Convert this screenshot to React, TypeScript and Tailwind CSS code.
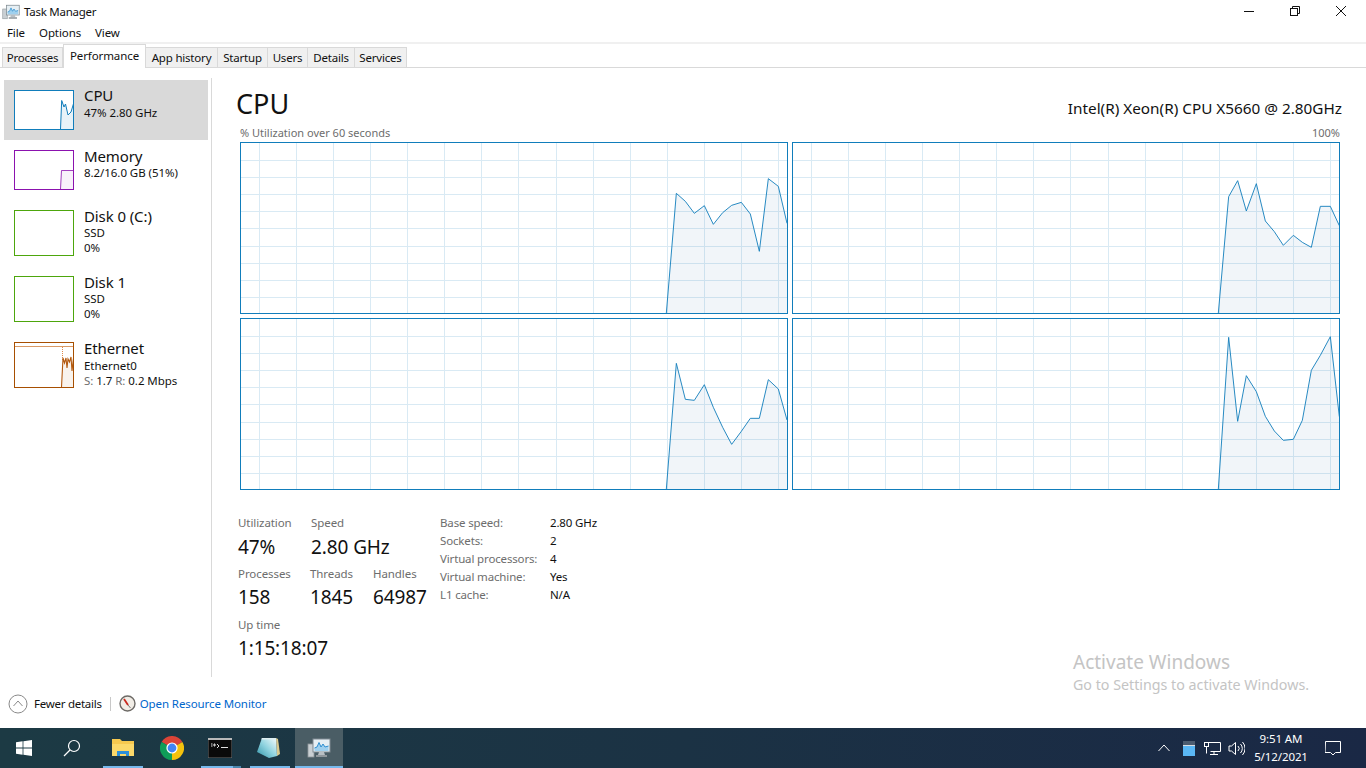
import React from "react";

type P = [number, number];
const conv = (pts: P[], ox: number, oy: number) =>
  pts.map(([x, y]) => [ox + x / 3, oy + y / 3] as P);

const GRAPHS: { x: number; y: number; first: number; pts: P[] }[] = [
  {
    x: 240, y: 142, first: 259,
    pts: conv([[79,549],[109,190],[136,214],[163,250],[193,227],[220,283],[248,248],[275,226],[304,217],[331,252],[358,364],[385,146],[415,169],[441,280]], 640, 130),
  },
  {
    x: 792, y: 142, first: 811,
    pts: conv([[115,549],[146,200],[173,152],[199,243],[229,161],[256,273],[283,305],[310,346],[340,316],[367,337],[394,352],[421,229],[451,229],[478,287]], 1180, 130),
  },
  {
    x: 240, y: 318, first: 259,
    pts: conv([[79,537],[109,160],[136,268],[163,271],[193,224],[220,292],[248,352],[275,403],[304,364],[331,325],[358,325],[385,209],[415,237],[441,330]], 640, 310),
  },
  {
    x: 792, y: 318, first: 811,
    pts: conv([[115,537],[146,82],[173,334],[199,197],[229,245],[256,319],[283,363],[310,391],[340,388],[367,331],[394,181],[421,136],[451,80],[478,320]], 1180, 310),
  },
];

function CpuGraph({ x, y, first, pts }: { x: number; y: number; first: number; pts: P[] }) {
  const bottom = y + 171;
  const right = x + 547;
  const vs = Array.from({ length: 15 }, (_, k) => Math.round(first + 37.07 * k) + 0.5);
  const hs = Array.from({ length: 9 }, (_, k) => Math.round(y + 18 + 17.1 * k) + 0.5);
  const line = pts.map((p) => p.join(",")).join(" ");
  const area = `${pts[0][0]},${bottom} ${line} ${pts[pts.length - 1][0]},${bottom}`;
  return (
    <div className="h-[172px] w-[548px] border border-[#117dbb] bg-white overflow-hidden">
      <svg width="546" height="170" viewBox={`${x + 1} ${y + 1} 546 170`} className="block">
        {vs.map((v) => (
          <line key={v} x1={v} x2={v} y1={y} y2={bottom} stroke="#d9eaf4" strokeWidth="1" />
        ))}
        {hs.map((h) => (
          <line key={h} x1={x} x2={right} y1={h} y2={h} stroke="#d9eaf4" strokeWidth="1" />
        ))}
        <polygon points={area} fill="#3a6ea5" fillOpacity="0.07" />
        <polyline points={line} fill="none" stroke="#117dbb" strokeWidth="1" strokeOpacity="0.9" />
      </svg>
    </div>
  );
}

function SideItem({
  name, lines, thumb, selected, cls, nameCls = "leading-[18px]",
}: {
  name: string;
  lines: React.ReactNode[];
  thumb: React.ReactNode;
  selected?: boolean;
  cls: string;
  nameCls?: string;
}) {
  return (
    <div className={`ml-[4px] w-[204px] flex gap-[10px] pl-[10px] pt-[10px] ${cls} ${selected ? "bg-[#d9d9d9]" : ""}`}>
      {thumb}
      <div className={`${selected ? "-mt-[4px]" : "-mt-[3px]"} text-[#111]`}>
        <div className={`text-[15px] ${nameCls}`}>{name}</div>
        {lines.map((l, i) => (
          <div key={i} className="text-[11.5px] leading-[15px] tracking-[-0.05px]">{l}</div>
        ))}
      </div>
    </div>
  );
}

const tabs: [string, string][] = [
  ["Processes", "w-[61px]"],
  ["Performance", "w-[83px]"],
  ["App history", "w-[72px]"],
  ["Startup", "w-[50px]"],
  ["Users", "w-[40px]"],
  ["Details", "w-[47px]"],
  ["Services", "w-[52px]"],
];

function Stat({ label, value, cls }: { label: string; value: string; cls: string }) {
  return (
    <div className={cls}>
      <div className="text-[11.5px] leading-[16px] tracking-[-0.08px] text-[#6d6d6d]">{label}</div>
      <div className="text-[19px] leading-[30px] mt-[0.5px] text-[#111] whitespace-nowrap">{value}</div>
    </div>
  );
}

const specs = [
  ["Base speed:", "2.80 GHz"],
  ["Sockets:", "2"],
  ["Virtual processors:", "4"],
  ["Virtual machine:", "Yes"],
  ["L1 cache:", "N/A"],
];

function TmIcon({ size = 24 }: { size?: number }) {
  return (
    <svg width={size} height={size} viewBox="0 0 24 24">
      <rect x="1" y="8" width="6" height="13" fill="#c9cfd3" stroke="#8f979c" strokeWidth="0.8" />
      <rect x="6" y="3" width="17" height="13" fill="#e6eff4" stroke="#7f8a91" strokeWidth="1" />
      <polygon points="7.5,15 7.5,12 10,11 12,6.500 14,11 16,8 18,11 21.5,10 21.5,15" fill="#9fd0ee" />
      <polyline points="7.5,12 10,11 12,6.5 14,11 16,8 18,11 21.5,10" fill="none" stroke="#2f8fd0" strokeWidth="1" />
      <path d="M12 16h5l1 3h-7z" fill="#b8bfc4" />
      <rect x="9" y="19" width="11" height="2" fill="#8f979c" />
    </svg>
  );
}

export default function App() {
  return (
    <div className="relative flex h-[768px] w-[1366px] flex-col overflow-hidden bg-white font-['Noto_Sans',sans-serif] text-[11.5px] tracking-[-0.1px] text-[#111]">
      {/* title bar */}
      <div className="flex h-[24px] shrink-0 items-center">
        <div className="ml-[2px] mr-[4px] flex h-[18px] w-[18px] items-center justify-center">
          <TmIcon size={18} />
        </div>
        <span className="tracking-[-0.25px]">Task Manager</span>
        <div className="ml-auto mr-[2px] -mt-[3px] flex h-full items-center">
          <div className="flex w-[46px] justify-center">
            <svg width="12" height="12" viewBox="0 0 12 12"><path d="M1 6.5h10" stroke="#111" strokeWidth="1" /></svg>
          </div>
          <div className="flex w-[46px] justify-center">
            <svg width="12" height="12" viewBox="0 0 12 12" fill="none" stroke="#111" strokeWidth="1">
              <rect x="1.5" y="3.5" width="7" height="7" />
              <path d="M3.5 3.5v-2h7v7h-2" />
            </svg>
          </div>
          <div className="flex w-[46px] justify-center">
            <svg width="12" height="12" viewBox="0 0 12 12" fill="none" stroke="#111" strokeWidth="1"><path d="M1 1l10 10M11 1L1 11" /></svg>
          </div>
        </div>
      </div>
      {/* menu */}
      <div className="flex h-[18px] shrink-0 items-center gap-[14px] pl-[7px]">
        <span>File</span>
        <span>Options</span>
        <span>View</span>
      </div>
      <div className="h-[2px] shrink-0 bg-[#f0f0f0]" />
      {/* tabs */}
      <div className="flex h-[24px] shrink-0 items-end border-b border-[#d9d9d9] pl-[2px]">
        {tabs.map(([t, w]) =>
          t === "Performance" ? (
            <div key={t} className={`relative -mb-px flex h-[24px] items-start justify-center border border-b-0 border-[#d9d9d9] bg-white pt-[2px] ${w}`}>
              {t}
            </div>
          ) : (
            <div key={t} className={`flex h-[20px] items-center justify-center border border-b-0 border-l-0 border-[#d9d9d9] bg-[#f0f0f0] tracking-[-0.2px] first:border-l ${w}`}>
              {t}
            </div>
          )
        )}
      </div>
      {/* main */}
      <div className="flex min-h-0 flex-1">
        <div className="w-[211px] shrink-0 pt-[12px]">
          <SideItem
            cls="h-[60px]"
            selected
            name="CPU"
            nameCls="leading-[19px]"
            lines={["47%  2.80 GHz"]}
            thumb={
              <div className="h-[40px] w-[60px] shrink-0 border border-[#117dbb] bg-white overflow-hidden">
                <svg width="58" height="38" viewBox="15 91 58 38" className="block">
                  <polygon points="60.5,129 61.7,100.500 64,107 65.500,104 68,115 71,112 74,102 74,129" fill="#117dbb" fillOpacity="0.1" />
                  <polyline points="60.5,129 61.7,100.500 64,107 65.500,104 68,115 71,112 74,102" fill="none" stroke="#117dbb" />
                </svg>
              </div>
            }
          />
          <SideItem
            cls="h-[60px]"
            name="Memory"
            lines={["8.2/16.0 GB (51%)"]}
            thumb={
              <div className="h-[40px] w-[60px] shrink-0 border border-[#8b12ae] bg-white overflow-hidden">
                <svg width="58" height="38" viewBox="15 151 58 38" className="block">
                  <polygon points="60,189 61.5,170.5 74,170.5 74,189" fill="#8b12ae" fillOpacity="0.06" />
                  <polyline points="60.5,189 61.5,170.5 74,170.5" fill="none" stroke="#8b12ae" strokeOpacity="0.8" />
                </svg>
              </div>
            }
          />
          <SideItem cls="h-[66px]" name="Disk 0 (C:)" lines={["SSD", "0%"]} thumb={<div className="h-[46px] w-[60px] shrink-0 border border-[#4da60c] bg-white" />} />
          <SideItem cls="h-[66px]" name="Disk 1" lines={["SSD", "0%"]} thumb={<div className="h-[46px] w-[60px] shrink-0 border border-[#4da60c] bg-white" />} />
          <SideItem
            cls="h-[66px]"
            name="Ethernet"
            nameCls="leading-[19px]"
            lines={[
              "Ethernet0",
              <><span className="text-[#6d6d6d]">S:</span> 1.7 <span className="text-[#6d6d6d]">R:</span> 0.2 Mbps</>,
            ]}
            thumb={
              <div className="h-[46px] w-[60px] shrink-0 border border-[#a74f01] bg-white overflow-hidden">
                <svg width="58" height="44" viewBox="15 343 58 44" className="block">
                  <path d="M15 346.5h58" stroke="#d99a66" />
                  <path d="M62.5 347v14" stroke="#e08a4a" strokeDasharray="1 1" />
                  <polygon points="61.500,387 63,358 64.500,363 66,358 67,368 68,359 69.500,362 71,357 72,371 73,362 74,355 74,387" fill="#a74f01" fillOpacity="0.07" />
                  <polyline points="61.500,387 63,358 64.500,363 66,358 67,368 68,359 69.500,362 71,357 72,371 73,362 74,355" fill="none" stroke="#b3590f" strokeWidth="1.1" />
                </svg>
              </div>
            }
          />
        </div>
        <div className="mt-[10px] mb-[8px] w-px shrink-0 bg-[#d9d9d9]" />

        {/* content */}
        <div className="min-w-0 flex-1 pr-[24px] pl-[24px]">
          <div className="flex h-[58px] items-start">
            <div className="mt-[16px] text-[27px] leading-[40px] tracking-normal text-[#111]">CPU</div>
            <div className="ml-auto mt-[30px] text-[15.3px] leading-[20px] tracking-normal whitespace-nowrap">Intel(R) Xeon(R) CPU X5660 @ 2.80GHz</div>
          </div>
          <div className="ml-[4px] mr-[2px] flex h-[16px] items-center justify-between pb-[2px] text-[11px] tracking-normal text-[#6d6d6d]">
            <span>% Utilization over 60 seconds</span>
            <span>100%</span>
          </div>
          <div className="ml-[4px] grid w-[1100px] grid-cols-[548px_548px] gap-x-[4px] gap-y-[4px]">
            {GRAPHS.map((g) => (
              <CpuGraph key={g.x + "-" + g.y} {...g} />
            ))}
          </div>
          <div className="ml-[2px] mt-[25px] flex">
            <div className="w-[202px] shrink-0">
              <div className="flex">
                <Stat label="Utilization" value="47%" cls="w-[73px]" />
                <Stat label="Speed" value="2.80 GHz" cls="w-[100px]" />
              </div>
              <div className="mt-[4px] flex">
                <Stat label="Processes" value="158" cls="w-[72px]" />
                <Stat label="Threads" value="1845" cls="w-[63px]" />
                <Stat label="Handles" value="64987" cls="w-[60px]" />
              </div>
              <div className="mt-[5px]">
                <Stat label="Up time" value="1:15:18:07" cls="w-[120px] [&>div:last-child]:-mt-[0.5px] [&>div:last-child]:tracking-[-0.15px]" />
              </div>
            </div>
            <div className="-mt-[1px] grid grid-cols-[110px_60px] auto-rows-[18px] items-center text-[11.5px] tracking-[-0.15px]">
              {specs.map(([k, v]) => (
                <React.Fragment key={k}>
                  <span className="text-[#6d6d6d] whitespace-nowrap">{k}</span>
                  <span className="whitespace-nowrap">{v}</span>
                </React.Fragment>
              ))}
            </div>
          </div>
        </div>
      </div>

      {/* footer */}
      <div className="flex h-[43px] shrink-0 items-center pl-[8px] pb-[6px]">
        <svg width="20" height="20" viewBox="0 0 20 20" fill="none" stroke="#8a8a8a">
          <circle cx="10" cy="10" r="9" />
          <path d="M5.5 12l4.5-5 4.5 5" />
        </svg>
        <span className="ml-[6px] tracking-[-0.26px]">Fewer details</span>
        <div className="mx-[8px] h-[14px] w-px bg-[#c8c8c8]" />
        <svg width="17" height="17" viewBox="0 0 17 17">
          <circle cx="8.5" cy="8.5" r="7.5" fill="#f1ede6" stroke="#6d6a66" strokeWidth="1.4" />
          <path d="M5 4l4 6" stroke="#c8281e" strokeWidth="1.8" />
          <path d="M9 10l2.5 3" stroke="#777" strokeWidth="1" />
        </svg>
        <span className="ml-[4px] text-[#0066cc]">Open Resource Monitor</span>
      </div>

      {/* taskbar */}
      <div className="flex h-[40px] shrink-0 items-stretch bg-gradient-to-r from-[#1c3a44] via-[#1b3244] to-[#1a2845] text-white">
        <div className="flex w-[48px] items-center justify-center">
          <svg width="16" height="16" viewBox="0 0 16 16" fill="#fff">
            <path d="M0 2.3L6.6 1.3v6.3H0zM7.4 1.2L16 0v7.6H7.4zM0 8.4h6.6v6.4L0 13.8zM7.4 8.4H16V16l-8.6-1.2z" />
          </svg>
        </div>
        <div className="flex w-[48px] items-center justify-center">
          <svg width="18" height="18" viewBox="0 0 18 18" fill="none" stroke="#fff" strokeWidth="1.2">
            <circle cx="11" cy="7" r="5.5" />
            <path d="M7 11l-6 6" />
          </svg>
        </div>
        <div className="relative ml-[3px] flex w-[48px] items-center justify-center">
          <svg width="22" height="20" viewBox="0 0 22 20">
            <path d="M0 1h8l2 2h12v15H0z" fill="#f6c94f" />
            <path d="M0 6h22v12H0z" fill="#fbd96a" />
            <path d="M5 18v-5h12v5h-3v-2H8v2z" fill="#2c90da" />
          </svg>
          <div className="absolute bottom-0 left-[4px] h-[2px] w-[40px] bg-[#76b9ed]" />
        </div>
        <div className="flex w-[50px] items-center justify-center">
          <svg width="24" height="24" viewBox="0 0 24 24">
            <path d="M12 12L1.6 6A12 12 0 0 1 22.4 6z" fill="#db4437" />
            <path d="M12 12l0 12A12 12 0 0 0 22.4 6z" fill="#f4c20d" />
            <path d="M12 12L1.6 6A12 12 0 0 0 12 24z" fill="#0f9d58" />
            <circle cx="12" cy="12" r="5.6" fill="#fff" />
            <circle cx="12" cy="12" r="4.4" fill="#4285f4" />
          </svg>
        </div>
        <div className="relative flex w-[46px] items-center justify-center">
          <svg width="24" height="20" viewBox="0 0 24 20">
            <rect width="24" height="20" fill="#0a0a0a" stroke="#888" strokeWidth="0.8" />
            <rect width="24" height="2" fill="#b9b9b9" />
            <path d="M3 6h1.500M3 8h1.500M6 6h1v2H6zM9 6l2 2-2 2M13 9.500h7" stroke="#e2e2e2" strokeWidth="1" fill="none" />
          </svg>
          <div className="absolute bottom-0 left-[4px] h-[2px] w-[32px] bg-[#76b9ed]" />
          <div className="absolute bottom-0 left-[36px] h-[2px] w-[8px] bg-[#4a86ad]" />
        </div>
        <div className="relative flex w-[52px] items-center justify-center">
          <svg width="24" height="22" viewBox="0 0 24 22">
            <defs>
              <linearGradient id="pad" x1="0" y1="1" x2="1" y2="0">
                <stop offset="0" stopColor="#2f93a8" />
                <stop offset="0.5" stopColor="#8fd3df" />
                <stop offset="1" stopColor="#f6fcfd" />
              </linearGradient>
            </defs>
            <path d="M19 1l2 1 2 15-3 2z" fill="#d8c98e" />
            <path d="M5 1h14l1 18-8 2-12-6z" fill="url(#pad)" />
            <path d="M5 1h14v1.500H4.200z" fill="#dfeef1" />
          </svg>
          <div className="absolute bottom-0 left-[7px] h-[2px] w-[40px] bg-[#76b9ed]" />
        </div>
        <div className="relative flex w-[48px] items-center justify-center bg-[#4a5d65]">
          <TmIcon size={24} />
          <div className="absolute bottom-0 left-0 h-[2px] w-full bg-[#76b9ed]" />
        </div>

        <div className="ml-auto flex items-center">
          <svg width="14" height="10" viewBox="0 0 14 10" fill="none" stroke="#fff" className="mr-[12px]">
            <path d="M1.5 8L7 2l5.5 6" />
          </svg>
          <svg width="12" height="15" viewBox="0 0 12 15" className="mr-[9px]">
            <rect width="12" height="5" fill="#4c5c70" />
            <rect y="5" width="12" height="10" fill="#5ab7f5" />
            <rect y="4" width="12" height="1" fill="#d8dde2" />
          </svg>
          <svg width="17" height="15" viewBox="0 0 17 15" fill="none" stroke="#fff" className="mr-[7px]">
            <path d="M3.5 1.5h13v9h-10M10 10.5v3M6 13.5h8" />
            <rect x="0.5" y="1.5" width="4" height="4" />
            <path d="M2.5 5.5v7" />
          </svg>
          <svg width="17" height="15" viewBox="0 0 17 15" fill="none" stroke="#fff" className="mr-[9px]">
            <path d="M1 5h2.5L7.5 1.5v12L3.5 10H1z" />
            <path d="M10 5a3.5 3.5 0 0 1 0 5M12.5 3a6.5 6.5 0 0 1 0 9M14.5 1a9.5 9.5 0 0 1 0 13" />
          </svg>
          <div className="w-[54px] text-center text-[11.5px] leading-[18px] tracking-[-0.1px] text-white">
            <div>9:51 AM</div>
            <div>5/12/2021</div>
          </div>
          <div className="flex w-[42px] items-center justify-center pl-[8px]">
            <svg width="16" height="15" viewBox="0 0 16 15" fill="none" stroke="#fff">
              <path d="M0.5 0.5h15v11h-5L8 14l-2.500-2.500h-5.500z" />
            </svg>
          </div>
          <div className="w-[16px]" />
        </div>
      </div>

      {/* watermark */}
      <div className="pointer-events-none absolute left-[1073px] top-[649px] tracking-normal text-[#c4c4c4]">
        <div className="text-[19px] leading-[26px]">Activate Windows</div>
        <div className="text-[14.25px] leading-[20px]">Go to Settings to activate Windows.</div>
      </div>
    </div>
  );
}
